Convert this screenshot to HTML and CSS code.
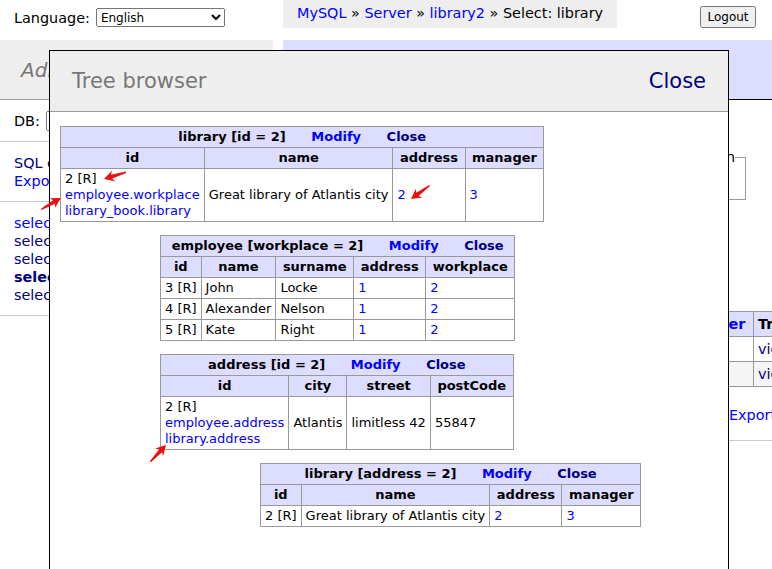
FILE: index.html
```html
<!DOCTYPE html>
<html>
<head>
<meta charset="utf-8">
<title>Select: library - Adminer</title>
<link rel="stylesheet" href="styles.css">
</head>
<body>
<div class="page">
  <div class="topbar">
    <form class="lang">Language: <select class="lang-sel"><option>English</option></select></form>
    <p class="breadcrumb"><a href="#">MySQL</a> » <a href="#">Server</a> » <a href="#">library2</a> » Select: library</p>
    <button class="logout" type="button">Logout</button>
  </div>
  <div class="main">
    <div class="menu">
      <h1><a href="#">Adminer</a> <span class="version">4.8.1</span></h1>
      <p class="dbrow">DB: <select class="db-sel"><option>library2</option></select></p>
      <p class="links"><a class="v" href="#">SQL command</a><br><a href="#">Export</a></p>
      <ul class="tables">
        <li><a href="#">select</a> <a href="#">address</a></li>
        <li><a class="v" href="#">select</a> <a class="v" href="#">book</a></li>
        <li><a class="v" href="#">select</a> <a class="v" href="#">employee</a></li>
        <li class="active"><a class="v" href="#">select</a> <a class="v" href="#">library</a></li>
        <li><a class="v" href="#">select</a> <a class="v" href="#">library_book</a></li>
      </ul>
    </div>
    <div class="content">
      <h2>Select: library</h2>
      <div class="fields">
        <fieldset class="action"><legend>Action</legend><div class="action-body"></div></fieldset>
      </div>
      <table class="results">
        <colgroup><col class="rc1"><col class="rc2"><col class="rc3"><col class="rc4"><col class="rc5"><col class="rc6"></colgroup>
        <thead>
          <tr><th><input type="checkbox"></th><th><a href="#">id</a></th><th><a href="#">name</a></th><th><a href="#">address</a></th><th><a href="#">manager</a></th><th class="tree-h">Tree</th></tr>
        </thead>
        <tbody>
          <tr><td><input type="checkbox"></td><td>1</td><td>Library of Alexandria</td><td><a href="#">1</a></td><td><a href="#">1</a></td><td><a class="v" href="#">view</a></td></tr>
          <tr class="odd"><td><input type="checkbox"></td><td>2</td><td>Great library of Atlantis city</td><td><a href="#">2</a></td><td><a href="#">3</a></td><td><a class="v" href="#">view</a></td></tr>
        </tbody>
      </table>
      <p class="export"><a href="#">Export</a></p>
    </div>
  </div>
</div>

<div class="modal">
  <div class="modal-head">
    <span class="modal-title">Tree browser</span>
    <a class="modal-close" href="#">Close</a>
  </div>
  <div class="tree">
    <table class="tb">
      <thead>
        <tr><th colspan="4">library [id = 2] <a class="act" href="#">Modify</a> <a class="act v" href="#">Close</a></th></tr>
        <tr><th>id</th><th>name</th><th>address</th><th>manager</th></tr>
      </thead>
      <tbody>
        <tr><td>2 [R]<br><a href="#">employee.workplace</a><br><a href="#">library_book.library</a></td><td>Great library of Atlantis city</td><td><a href="#">2</a></td><td><a href="#">3</a></td></tr>
      </tbody>
    </table>

    <table class="tb ind1">
      <thead>
        <tr><th colspan="5">employee [workplace = 2] <a class="act" href="#">Modify</a> <a class="act v" href="#">Close</a></th></tr>
        <tr><th>id</th><th>name</th><th>surname</th><th>address</th><th>workplace</th></tr>
      </thead>
      <tbody>
        <tr><td>3 [R]</td><td>John</td><td>Locke</td><td><a href="#">1</a></td><td><a href="#">2</a></td></tr>
        <tr><td>4 [R]</td><td>Alexander</td><td>Nelson</td><td><a href="#">1</a></td><td><a href="#">2</a></td></tr>
        <tr><td>5 [R]</td><td>Kate</td><td>Right</td><td><a href="#">1</a></td><td><a href="#">2</a></td></tr>
      </tbody>
    </table>

    <table class="tb ind1">
      <thead>
        <tr><th colspan="4">address [id = 2] <a class="act" href="#">Modify</a> <a class="act v" href="#">Close</a></th></tr>
        <tr><th>id</th><th>city</th><th>street</th><th>postCode</th></tr>
      </thead>
      <tbody>
        <tr><td>2 [R]<br><a href="#">employee.address</a><br><a href="#">library.address</a></td><td>Atlantis</td><td>limitless 42</td><td>55847</td></tr>
      </tbody>
    </table>

    <table class="tb ind2">
      <thead>
        <tr><th colspan="4">library [address = 2] <a class="act" href="#">Modify</a> <a class="act v" href="#">Close</a></th></tr>
        <tr><th>id</th><th>name</th><th>address</th><th>manager</th></tr>
      </thead>
      <tbody>
        <tr><td>2 [R]</td><td>Great library of Atlantis city</td><td><a href="#">2</a></td><td><a href="#">3</a></td></tr>
      </tbody>
    </table>
  </div>
</div>

<svg class="arrows" width="772" height="569" viewBox="0 0 772 569" aria-hidden="true">
  <defs>
    <polygon id="arr" points="0,0 -10,-5.5 -8,-2 -23,-0.7 -23,0.7 -8,2 -10,5.5"/>
  </defs>
  <use href="#arr" transform="translate(104,179) rotate(163)"/>
  <use href="#arr" transform="translate(61,198) rotate(-30)"/>
  <use href="#arr" transform="translate(411,199) rotate(144)"/>
  <use href="#arr" transform="translate(166,445) rotate(-47)"/>
</svg>
</body>
</html>
```

FILE: styles.css
```css
html, body {
  margin: 0;
  padding: 0;
  overflow: hidden;
}
body {
  position: relative;
  width: 772px;
  height: 569px;
  font: 14.4px/1.25 "DejaVu Sans", Verdana, sans-serif;
  color: #000;
  background: #fff;
}
a { color: #0000ff; text-decoration: none; }
a.v { color: #000080; }

/* top bar */
.topbar {
  display: flex;
  align-items: flex-start;
  height: 40px;
}
.lang {
  display: flex;
  align-items: center;
  gap: 6px;
  box-sizing: border-box;
  width: 283px;
  height: 35px;
  margin: 0;
  padding-left: 14px;
  white-space: nowrap;
}
.lang-sel {
  font: 12px "DejaVu Sans", sans-serif;
  width: 129px;
  height: 19px;
  margin: 0;
}
.breadcrumb {
  margin: 0;
  height: 28px;
  line-height: 26px;
  padding: 0 14px;
  background: #eee;
  white-space: nowrap;
}
.logout {
  margin: 6px 16px 0 auto;
  width: 56px;
  height: 22px;
  padding: 0;
  font: 12px "DejaVu Sans", sans-serif;
}

/* main */
.main {
  display: flex;
  gap: 10px;
}
.menu {
  flex: none;
  width: 273px;
}
.menu h1 {
  display: flex;
  align-items: center;
  gap: 8px;
  margin: 0;
  height: 59px;
  padding-left: 21px;
  border-bottom: 1px solid #999;
  background: #eee;
  font: italic normal 20px "DejaVu Sans", sans-serif;
  color: #777;
}
.menu h1 a { color: #777; }
.menu h1 .version { font-size: 12px; font-style: normal; }
.menu p, .tables {
  margin: 0;
  padding: 11.5px 14px;
  border-bottom: 1px solid #ccc;
  line-height: 18px;
}
.dbrow {
  display: flex;
  align-items: center;
  gap: 6px;
  height: 18px;
}
.db-sel {
  font: 12px "DejaVu Sans", sans-serif;
  width: 150px;
  height: 20px;
  margin: 0;
}
.tables { list-style: none; }
.tables .active a { font-weight: bold; }

.content {
  flex: 1;
  min-width: 0;
}
.content h2 {
  display: flex;
  align-items: center;
  margin: 0;
  height: 59px;
  padding-left: 18px;
  border-bottom: 1px solid #000;
  background: #ddf;
  font-size: 21.6px;
  font-weight: normal;
}
.fields {
  margin-top: 48px;
  padding-left: 395px;
}
.action {
  box-sizing: border-box;
  width: 68px;
  min-width: 0;
  margin: 0;
  padding: 0 11px;
  border: 1px solid #999;
}
.action legend { padding: 0; }
.action-body { height: 33px; }
.results {
  table-layout: fixed;
  width: 560px;
  margin-top: 111px;
  border-collapse: collapse;
  border: 1px solid #999;
}
.results .rc1 { width: 30px; }
.results .rc2 { width: 50px; }
.results .rc3 { width: 220px; }
.results .rc4 { width: 82px; }
.results .rc5 { width: 88px; }
.results .rc6 { width: 90px; }
.results th, .results td {
  border: 1px solid #999;
  padding: 3px 4px;
  white-space: nowrap;
  overflow: hidden;
}
.results th {
  background: #ddf;
  text-align: center;
  padding: 3px 7px;
}
.results th.tree-h { text-align: left; padding-left: 4px; }
.results input { margin: 0; }
.results .odd td { background: #f5f5f5; }
.export {
  margin: 19px 0 0;
  padding: 0 0 16px 446px;
  line-height: 18px;
  border-bottom: 1px solid #ccc;
}

/* modal */
.modal {
  position: absolute;
  left: 49px;
  top: 50px;
  width: 678px;
  height: 540px;
  border: 1px solid #000;
  background: #fff;
  z-index: 5;
}
.modal-head {
  display: flex;
  align-items: center;
  justify-content: space-between;
  height: 60px;
  padding: 0 22px;
  background: #eee;
  border-bottom: 1px solid #999;
  font-size: 21px;
}
.modal-title { color: #777; }
.modal-close { color: #000080; }
.tree {
  padding: 1px 10px 0;
  font-size: 13px;
  line-height: 16px;
}
.tb {
  border-collapse: collapse;
  border: 1px solid #999;
  margin-top: 13px;
}
.tb th, .tb td {
  border: 1px solid #999;
  padding: 2px 4px;
  white-space: nowrap;
}
.tb th {
  background: #ddf;
  text-align: center;
  padding: 2px 6.5px;
}
.tb td { vertical-align: middle; text-align: left; }
.tb .act { margin-left: 21px; }
.ind1 { margin-left: 100px; }
.ind2 { margin-left: 200px; }

/* annotation arrows */
.arrows {
  position: absolute;
  left: 0;
  top: 0;
  z-index: 10;
  pointer-events: none;
  fill: #ea1010;
}
```
